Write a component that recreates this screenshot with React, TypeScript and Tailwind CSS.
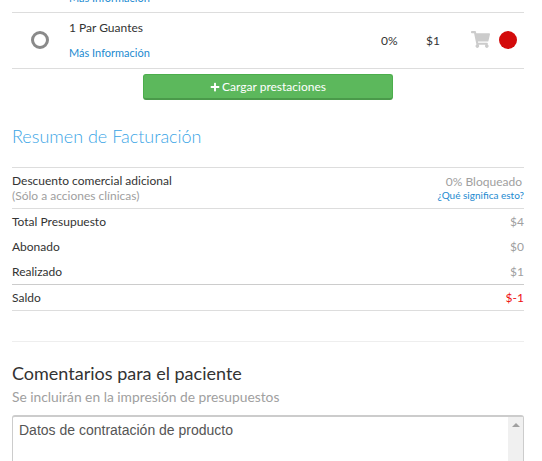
import { FaPlus, FaShoppingCart } from "react-icons/fa";

const font = { fontFamily: "Lato, sans-serif" };

export default function App() {
  return (
    <div className="h-[461px] w-[542px] overflow-hidden bg-white text-[#333]" style={font}>
      <div className="pl-3 pr-[18px]">
        {/* clipped row above */}
        <div className="h-[13px] border-b border-[#ddd] overflow-hidden">
          <a className="block -mt-[12px] ml-[57px] text-[11px] leading-[20px] text-[#1c8ad0]">Más Información</a>
        </div>

        {/* item row */}
        <div className="flex h-[56px] items-center border-b border-[#ddd]">
          <div className="flex w-[57px] justify-center pr-[1px] pb-[2px]">
            <div className="h-[18px] w-[18px] rounded-full border-[3px] border-[#8a8a8a]" />
          </div>
          <div className="flex flex-1 flex-col">
            <span className="text-[12px] leading-[16px] mt-[-1px]">1 Par Guantes</span>
            <a className="mt-[9px] text-[11px] leading-[16px] text-[#1c8ad0]">Más Información</a>
          </div>
          <span className="w-[17px] text-[12px] mr-[28px] leading-none">0%</span>
          <span className="w-[14px] text-[12px] mr-[31px] leading-none">$1</span>
          <FaShoppingCart className="h-[17px] w-[19px] text-[#cccccc] mb-[2px]" />
          <div className="ml-[9px] mr-[7px] mb-[2px] h-[18px] w-[18px] rounded-full bg-[#d30b0b]" />
        </div>

        <div className="mt-[5px] flex justify-center">
          <button className="flex h-[26px] w-[250px] items-center justify-center rounded-[3px] border border-[#4cae4c] border-b-2 border-b-[#4a9a4a] bg-[#5cb85c] text-[12px] text-white">
            <FaPlus className="mr-[2px] h-[10px] w-[10px]" />
            Cargar prestaciones
          </button>
        </div>

        <h3 className="mt-[25px] text-[18px] leading-[22px] font-light text-[#3aa5e6]">Resumen de Facturación</h3>

        <div className="mt-[20px] border-t border-[#ddd]">
          <div className="flex h-[41px] justify-between border-b border-[#ddd]">
            <div className="pt-[5px]">
              <div className="text-[12px] leading-[15px]">Descuento comercial adicional</div>
              <div className="text-[12px] leading-[15px] text-[#a0a0a0]">(Sólo a acciones clínicas)</div>
            </div>
            <div className="pt-[6px] text-right">
              <div className="pr-[2px] text-[12px] leading-[15px] text-[#a0a0a0]">0% Bloqueado</div>
              <a className="block text-[10px] leading-[13px] text-[#1c8ad0]">¿Qué significa esto?</a>
            </div>
          </div>
          <div className="flex h-[25px] items-center justify-between text-[12px]">
            <span>Total Presupuesto</span>
            <span className="text-[#a0a0a0]">$4</span>
          </div>
          <div className="flex h-[25px] items-center justify-between text-[12px]">
            <span>Abonado</span>
            <span className="text-[#a0a0a0]">$0</span>
          </div>
          <div className="flex h-[26px] items-center justify-between border-b border-[#ccc] text-[12px]">
            <span>Realizado</span>
            <span className="text-[#a0a0a0]">$1</span>
          </div>
          <div className="flex h-[26px] items-center justify-between border-b border-[#ddd] text-[12px]">
            <span>Saldo</span>
            <span className="text-[#ee1111]">$-1</span>
          </div>
        </div>

        <hr className="mt-[30px] border-[#eee]" />

        <h2 className="mt-[19px] text-[18px] leading-[24px] text-[#333]">Comentarios para el paciente</h2>
        <p className="mt-[2px] text-[13.8px] leading-[20px] text-[#a0a0a0]">Se incluirán en la impresión de presupuestos</p>

        <div className="mt-[8px] flex h-[60px] rounded-[3px] border border-[#ccc] border-t-2">
          <div
            className="flex-1 pl-[6px] pt-[3px] text-[14px] leading-[20px] text-[#555]"
            style={{ fontFamily: "'Liberation Sans', sans-serif" }}
          >
            Datos de contratación de producto
          </div>
          <div className="flex w-[15px] justify-center bg-[#f0f0f0] pt-[6px]">
            <div className="h-0 w-0 border-x-[4px] border-b-[4px] border-x-transparent border-b-[#a0a0a0]" />
          </div>
        </div>
      </div>
    </div>
  );
}
